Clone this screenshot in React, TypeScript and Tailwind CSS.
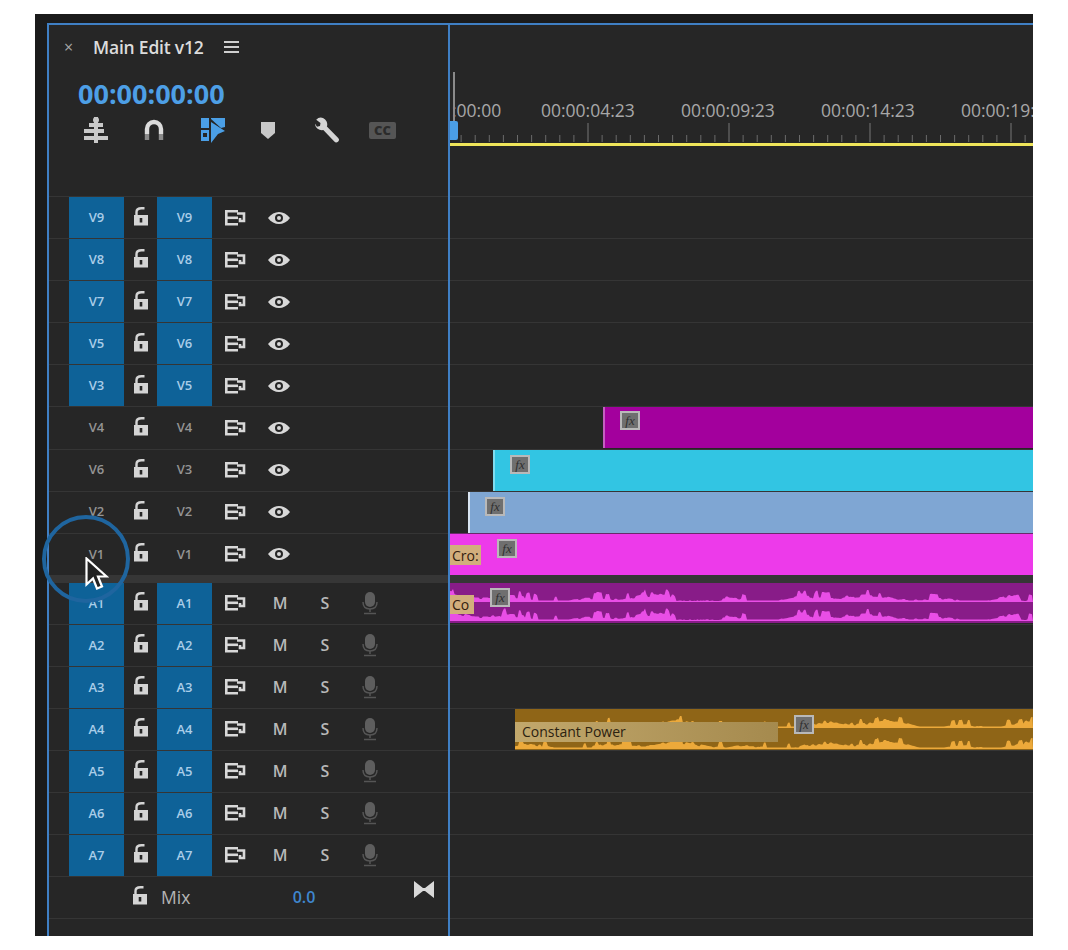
import React from "react";

const videoTracks = [
  { src: "V9", dst: "V9", on: true },
  { src: "V8", dst: "V8", on: true },
  { src: "V7", dst: "V7", on: true },
  { src: "V5", dst: "V6", on: true },
  { src: "V3", dst: "V5", on: true },
  { src: "V4", dst: "V4", on: false },
  { src: "V6", dst: "V3", on: false },
  { src: "V2", dst: "V2", on: false },
  { src: "V1", dst: "V1", on: false },
];

const audioTracks = ["A1", "A2", "A3", "A4", "A5", "A6", "A7"];

const LockIcon = () => (
  <svg width="16" height="19" viewBox="0 0 16 19" className="mb-[3px]">
    <path d="M3.500 9V5C3.500 2.800 5.500 1.300 8.500 1.300h3" fill="none" stroke="#d4d4d4" strokeWidth="2.400" />
    <path fillRule="evenodd" d="M1 8h14v10.500H1zM6.700 11v4.500h2.600V11z" fill="#d4d4d4" />
  </svg>
);

const OutputIcon = () => (
  <svg width="22" height="18" viewBox="0 0 22 18" fill="none" stroke="#d8d8d8" strokeWidth="2.600">
    <path d="M14 2.300H2.300v13H14" />
    <path d="M2.300 8.800H14" />
    <path d="M13 4.500h7v7.500h-4v-3" />
  </svg>
);

const EyeIcon = () => (
  <svg width="24" height="14" viewBox="0 0 24 14">
    <path fillRule="evenodd" d="M1 7c3-4 7-6 11-6s8 2 11 6c-3 4-7 6-11 6S4 11 1 7zm11-4a4 4 0 100 8 4 4 0 000-8z" fill="#d8d8d8" />
    <circle cx="12" cy="7" r="2" fill="#d8d8d8" />
  </svg>
);

const MicIcon = () => (
  <svg width="18" height="24" viewBox="0 0 18 24">
    <rect x="4" y="1" width="10" height="15" rx="5" fill="#5e5e5e" />
    <path d="M2 11c0 5 3 7 7 7s7-2 7-7" fill="none" stroke="#555" strokeWidth="1.500" />
    <path d="M9 18v3M3 22.500h12" stroke="#555" strokeWidth="1.500" />
  </svg>
);

const NestIcon = () => (
  <svg width="26" height="26" viewBox="0 0 26 26" fill="#c8c8c8">
    <rect x="11" y="0" width="4" height="26" />
    <circle cx="13" cy="3" r="3" />
    <rect x="6" y="6" width="5" height="4" />
    <rect x="15" y="6" width="5" height="4" />
    <rect x="1" y="12" width="10" height="4" />
    <rect x="15" y="12" width="6" height="4" />
    <rect x="1" y="19" width="10" height="4" />
    <rect x="15" y="19" width="10" height="4" />
  </svg>
);

const MagnetIcon = () => (
  <svg width="22" height="24" viewBox="0 0 22 24" fill="none">
    <path d="M4 16V11a7 7 0 0114 0v5" stroke="#dcdcdc" strokeWidth="4.400" />
    <path d="M4 16v6M18 16v6" stroke="#8a8a8a" strokeWidth="4.400" />
  </svg>
);

const LinkedIcon = () => (
  <svg width="26" height="26" viewBox="0 0 26 26">
    <path d="M1 1h8v10H1z" fill="#4b9fe6" />
    <path fillRule="evenodd" d="M1 13h8v11H1zM3 16v4h4v-4z" fill="#4b9fe6" />
    <path d="M11 1h14v9l-4 1-10-9z" fill="#4b9fe6" />
    <path d="M11 5l14 9-7 3-7 9z" fill="#4b9fe6" />
  </svg>
);

const MarkerIcon = () => (
  <svg width="16" height="20" viewBox="0 0 16 20">
    <path d="M1 2h14v11l-7 6-7-6z" fill="#c8c8c8" />
  </svg>
);

const WrenchIcon = () => (
  <svg width="26" height="26" viewBox="0 0 26 26">
    <path d="M8 1a6.500 6.500 0 00-6.800 1.700l4.300 3.300-.5 3-3 .8L-.1 6.500A7 7 0 008.300 13l11 11.500a2.500 2.500 0 003.900-3.500L11.900 9.600A7 7 0 008 1z" fill="#d4d4d4" />
  </svg>
);

const BowtieIcon = () => (
  <svg width="22" height="17" viewBox="0 0 22 17" fill="#d8d8d8">
    <path d="M1 0l9 7v3l-9 7zM21 0l-9 7v3l9 7z" />
    <path d="M8 7h6v3H8z" />
  </svg>
);

const FxBadge = ({ className }: { className: string }) => (
  <span className={"flex h-[19px] w-[20px] items-center justify-center border-2 border-[#b9b9b9] bg-[#6f6f6f] text-[13px] italic leading-none text-[#2f2f2f] [font-family:'Liberation_Serif',serif] " + className}>
    fx
  </span>
);

// small repeatable pseudo random, so the wave stays the same between renders
const noise = (i: number, seed: number) => {
  const v = Math.sin(i * 12.9898 + seed * 78.233) * 43758.5453;
  return v - Math.floor(v);
};

const wavePath = (width: number, base: number, max: number, seed: number, quiet: [number, number][]) => {
  let d = "M0 " + base;
  for (let x = 0; x <= width; x += 1.5) {
    const env = 0.32 + 0.2 * Math.sin(x / 31 + seed) + 0.14 * Math.sin(x / 11.3 + seed * 2);
    const n = noise(Math.floor(x / 3), seed);
    const spike = noise(Math.floor(x / 4), seed + 5) > 0.86 ? 0.4 : 0;
    const isQuiet = quiet.some(([a, b]) => x > a && x < b);
    const h = isQuiet ? 0.8 + noise(x, seed) : Math.max(1.5, max * (env * (0.6 + 0.6 * n) + spike));
    d += " L" + x + " " + (base - Math.min(h, max)).toFixed(1);
  }
  return d + " L" + width + " " + base + " Z";
};

const PINK_QUIET: [number, number][] = [[225, 272], [570, 578]];

const blueCell = "flex h-full w-[55px] items-center justify-center text-[13px] font-semibold ";

const TrackHead = ({ src, dst, on }: { src: string; dst: string; on: boolean }) => (
  <>
    <span className={blueCell + (on ? "bg-[#0e6298] text-[#a9cde8]" : "text-[#949494]")}>
      {src}
    </span>
    <span className="flex w-[33px] justify-center"><LockIcon /></span>
    <span className={blueCell + (on ? "bg-[#0e6298] text-[#a9cde8]" : "text-[#949494]")}>
      {dst}
    </span>
    <span className="ml-[12px] flex w-[22px] justify-center"><OutputIcon /></span>
  </>
);

const Ruler = () => (
  <svg width="583" height="23" viewBox="0 0 583 23" className="block">
    {Array.from({ length: 42 }, (_, i) => {
      const x = 137.5 - 14.1 * 9 + i * 14.1;
      const major = Math.abs(((x - 137.5) / 141) - Math.round((x - 137.5) / 141)) < 0.01;
      return <rect key={i} x={x} y={major ? 3 : 15} width="1" height={major ? 19 : 7} fill={major ? "#777" : "#6a6a6a"} />;
    })}
  </svg>
);

export default function App() {
  return (
    <div className="min-h-[950px] bg-white pl-[35px] pt-[14px] [font-family:'Open_Sans',sans-serif]">
      <div className="relative h-[922px] w-[998px] overflow-hidden bg-[#1b1b1b] pl-[12px] pt-[9px]">
        <div className="flex h-full border-l-2 border-t-2 border-[#3f7fc4] bg-[#262626]">
          <div className="w-[399px] shrink-0">
            <div className="h-[171px]">
              <div className="flex h-[44px] items-center pl-[15px] text-[#dcdcdc]">
                <span className="w-[29px] text-[16px] text-[#a8a8a8]">×</span>
                <span className="text-[17.5px] font-semibold tracking-[-0.2px]">Main Edit v12</span>
                <span className="ml-[20px] flex w-[15px] flex-col gap-[3px]">
                  <span className="h-[2px] bg-[#cfcfcf]" />
                  <span className="h-[2px] bg-[#cfcfcf]" />
                  <span className="h-[2px] bg-[#cfcfcf]" />
                </span>
              </div>
              <div className="mt-[7px] pl-[29px] text-[27px] font-bold leading-[36px] text-[#4d9fe6]">00:00:00:00</div>
              <div className="mt-[5px] flex items-center pl-[34px]">
                <span className="flex w-[57px] justify-start"><NestIcon /></span>
                <span className="flex w-[58px] justify-start pl-[3px]"><MagnetIcon /></span>
                <span className="flex w-[57px] justify-start pl-[2px]"><LinkedIcon /></span>
                <span className="flex w-[58px] justify-start pl-[5px]"><MarkerIcon /></span>
                <span className="flex w-[56px] justify-start pl-[2px]"><WrenchIcon /></span>
                <span className="flex h-[17px] w-[27px] items-center justify-center rounded-[2px] bg-[#555] text-[13px] font-extrabold leading-none text-[#2b2b2b]">CC</span>
              </div>
            </div>

            {videoTracks.map((t) => (
              <div key={t.src} className="flex h-[42.1px] items-center border-t border-[#353535] pl-[20px]">
                <TrackHead src={t.src} dst={t.dst} on={t.on} />
                <span className="ml-[21px] flex w-[24px] justify-center"><EyeIcon /></span>
              </div>
            ))}

            <div className="h-[8px] bg-[#363636]" />

            {audioTracks.map((name) => (
              <div key={name} className="flex h-[42px] items-center border-b border-[#353535] pl-[20px]">
                <TrackHead src={name} dst={name} on />
                <span className="ml-[23px] w-[22px] text-center text-[16px] font-semibold text-[#b8b8b8]">M</span>
                <span className="ml-[24px] w-[20px] text-center text-[16px] font-semibold text-[#b8b8b8]">S</span>
                <span className="ml-[26px] flex w-[18px] justify-center"><MicIcon /></span>
              </div>
            ))}

            <div className="flex h-[42px] items-center border-b border-[#353535] pl-[83px]">
              <LockIcon />
              <span className="ml-[13px] w-[123px] text-[17.5px] text-[#b4b4b4]">Mix</span>
              <span className="w-[40px] text-center text-[16px] font-semibold text-[#3f86cf]">0.0</span>
              <span className="mb-[16px] ml-[89px]"><BowtieIcon /></span>
            </div>
          </div>

          <div className="relative min-w-0 flex-1 overflow-hidden border-l-2 border-[#3f7fc4]">
            <div className="relative h-[171px]">
              <span className="absolute left-[3px] top-[47px] h-[50px] w-[2px] bg-[#8a8a8a]" />
              <span className="absolute left-[-2px] top-[96px] h-[19px] w-[10px] rounded-[2px] bg-[#4b9fe6]" />
              <div className="flex pl-[2px] pt-[75px] text-[17.5px] leading-[20px] text-[#a8a8a8]">
                <span className="w-[89px] shrink-0">:00:00</span>
                <span className="w-[140px] shrink-0">00:00:04:23</span>
                <span className="w-[140px] shrink-0">00:00:09:23</span>
                <span className="w-[140px] shrink-0">00:00:14:23</span>
                <span className="shrink-0 whitespace-nowrap">00:00:19:</span>
              </div>
              <Ruler />
              <div className="h-[3px] bg-[#efe55a]" />
            </div>

            <div className="h-[42.1px] border-t border-[#353535]" />
            <div className="h-[42.1px] border-t border-[#353535]" />
            <div className="h-[42.1px] border-t border-[#353535]" />
            <div className="h-[42.1px] border-t border-[#353535]" />
            <div className="h-[42.1px] border-t border-[#353535]" />

            <div className="h-[42.1px] border-t border-[#353535]">
              <div className="ml-[153px] h-[41px] border-l-2 border-[#c45fc0] bg-[#a3009d] pl-[15px] pt-[4px]">
                <FxBadge className="" />
              </div>
            </div>
            <div className="h-[42.1px] border-t border-[#353535]">
              <div className="ml-[43px] h-[41px] border-l-2 border-[#7fdcef] bg-[#32c5e3] pl-[15px] pt-[5px]">
                <FxBadge className="border-[#8fb0b8]" />
              </div>
            </div>
            <div className="h-[42.1px] border-t border-[#353535]">
              <div className="ml-[18px] h-[41px] border-l-2 border-[#d9e5f2] bg-[#7fa6d3] pl-[15px] pt-[5px]">
                <FxBadge className="border-[#a9b8c8]" />
              </div>
            </div>
            <div className="h-[42.1px] border-t border-[#6b2a6b]">
              <div className="relative h-[41px] bg-[#ed3aea] pl-[47px] pt-[5px]">
                <FxBadge className="" />
                <span className="absolute left-0 top-[11px] h-[20px] w-[31px] bg-[#d2ae7c] pl-[2px] text-[14px] leading-[21px] text-[#33200f]">Cro:</span>
              </div>
            </div>

            <div className="h-[8px] bg-[#363636]" />

            <div className="h-[42px] border-b border-[#353535]">
              <div className="relative h-[40px] bg-[#881c88]">
                <svg width="583" height="40" viewBox="0 0 583 40" className="block" fill="#e94ee6">
                  <path d={wavePath(583, 19, 13, 1, PINK_QUIET)} />
                  <path d={wavePath(583, 38, 13, 1, PINK_QUIET)} />
                </svg>
                <FxBadge className="absolute left-[40px] top-[5px]" />
                <span className="absolute left-0 top-[12px] h-[19px] w-[24px] bg-[#d2ae7c] pl-[2px] text-[14px] leading-[20px] text-[#33200f]">Co</span>
              </div>
            </div>
            <div className="h-[42px] border-b border-[#353535]" />
            <div className="h-[42px] border-b border-[#353535]" />
            <div className="h-[42px] border-b border-[#353535]">
              <div className="relative ml-[65px] h-[41px] bg-[#8f6517]">
                <svg width="518" height="41" viewBox="0 0 518 41" className="block" fill="#eca93a">
                  <path d={wavePath(518, 19, 12, 3, [[0, 40], [100, 130]])} />
                  <path d={wavePath(518, 40, 12, 3, [])} />
                </svg>
                <span className="absolute left-0 top-[13px] h-[20px] w-[263px] bg-gradient-to-r from-[#c2a86c] to-[#a58a4e] pl-[7px] text-[14px] leading-[20px] text-[#2c2210]">Constant Power</span>
                <FxBadge className="absolute left-[279px] top-[6px]" />
              </div>
            </div>
            <div className="h-[42px] border-b border-[#353535]" />
            <div className="h-[42px] border-b border-[#353535]" />
            <div className="h-[42px] border-b border-[#353535]" />
            <div className="h-[42px] border-b border-[#353535]" />
          </div>
        </div>

        <span className="absolute left-[7px] top-[501px] h-[88px] w-[88px] rounded-full border-[4px] border-[#1f659f]" />
        <svg width="24" height="36" viewBox="0 0 24 36" className="absolute left-[50px] top-[543px]">
          <path d="M1.500 1.500v26l6.500-6 4 10 5-2-4-10h8.500z" fill="#222" stroke="#fff" strokeWidth="2.200" />
        </svg>
      </div>
    </div>
  );
}
